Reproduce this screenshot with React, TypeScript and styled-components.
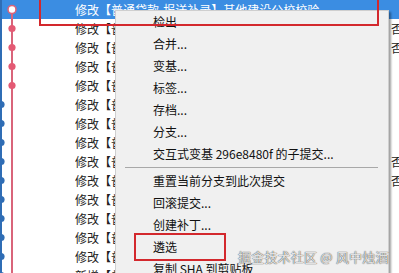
import React from "react";
import styled, { createGlobalStyle } from "styled-components";

const Global = createGlobalStyle`
  html, body { margin: 0; padding: 0; background: #fff; overflow: hidden; }
  body { font-family: "Noto Sans CJK SC", "Noto Sans", sans-serif; }
`;

const Page = styled.div`
  position: relative;
  width: 399px;
  height: 273px;
  overflow: hidden;
  background: #fff;
`;

const List = styled.div`
  display: flex;
  flex-direction: column;
`;

const Row = styled.div<{ $selected?: boolean }>`
  display: grid;
  grid-template-columns: 24px 51px 316px 1fr;
  align-items: center;
  height: 19px;
  background: ${(p) => (p.$selected ? "#3b8de2" : "#fff")};
  color: ${(p) => (p.$selected ? "#fff" : "#222")};
  font-size: 12px;
  line-height: 19px;
  white-space: nowrap;
  overflow: hidden;
`;

const Cell = styled.div`
  overflow: hidden;
  height: 19px;
`;

const GraphSvg = styled.svg`
  display: block;
`;

const Menu = styled.div`
  position: absolute;
  left: 115px;
  top: 10px;
  width: 272px;
  background: #f0f0f0;
  border: 1px solid #cfcfcf;
  box-shadow: 2px 2px 2px rgba(0, 0, 0, 0.38);
  display: flex;
  flex-direction: column;
  font-size: 12px;
  color: #111;
`;

const Item = styled.div`
  height: 22px;
  line-height: 22px;
  padding-left: 37px;
  white-space: nowrap;
`;

const Separator = styled.div`
  height: 1px;
  background: #a8a8a8;
  margin: 2px 10px 2px 9px;
`;

const Box = styled.div<{ $l: number; $t: number; $w: number; $h: number }>`
  position: absolute;
  left: ${(p) => p.$l}px;
  top: ${(p) => p.$t}px;
  width: ${(p) => p.$w}px;
  height: ${(p) => p.$h}px;
  border: 2px solid #d3282d;
  box-sizing: border-box;
  pointer-events: none;
`;

const Watermark = styled.div`
  position: absolute;
  left: 238px;
  top: 247px;
  font-size: 13px;
  color: rgba(255, 255, 255, 0.85);
  text-shadow: 0 0 1px rgba(0, 0, 0, 0.7), 0 0 1px rgba(0, 0, 0, 0.5);
  white-space: nowrap;
  letter-spacing: 0.2px;
`;

type Kind = "top" | "pink" | "blue";

function Graph({ kind }: { kind: Kind }) {
  return (
    <GraphSvg width={24} height={19} viewBox="0 0 24 19">
      <rect x={0} y={0} width={2} height={19} fill="#2f6db5" />
      {kind === "top" ? (
        <rect x={11} y={9} width={2} height={10} fill="#d9647a" />
      ) : (
        <rect x={11} y={0} width={2} height={19} fill="#d9647a" />
      )}
      {kind === "top" && (
        <circle cx={12} cy={9.5} r={4} fill="#fff" stroke="#d9647a" strokeWidth={1.6} />
      )}
      {kind === "pink" && <circle cx={12} cy={9.5} r={3.6} fill="#e45a74" />}
      {kind === "blue" && <circle cx={1} cy={9.5} r={3.6} fill="#2f6db5" />}
    </GraphSvg>
  );
}

const rows: { kind: Kind; text: string; extra?: string }[] = [
  { kind: "top", text: "修改【普通贷款-报送补录】其他建设公校校验" },
  { kind: "pink", text: "修改【普通贷款-报送补录】", extra: "否利" },
  { kind: "pink", text: "修改【普通贷款-报送补录】", extra: "否利" },
  { kind: "pink", text: "修改【普通贷款-报送补录】" },
  { kind: "pink", text: "修改【普通贷款-报送补录】" },
  { kind: "blue", text: "修改【普通贷款-报送补录】" },
  { kind: "blue", text: "修改【普通贷款-报送补录】" },
  { kind: "blue", text: "修改【普通贷款-报送补录】" },
  { kind: "blue", text: "修改【普通贷款-报送补录】", extra: "否利" },
  { kind: "blue", text: "修改【普通贷款-报送补录】", extra: "否利" },
  { kind: "blue", text: "修改【普通贷款-报送补录】" },
  { kind: "blue", text: "修改【普通贷款-报送补录】" },
  { kind: "blue", text: "修改【普通贷款-报送补录】" },
  { kind: "blue", text: "修改【普通贷款-报送补录】" },
  { kind: "blue", text: "新增【普通贷款-报送补录】" },
];

const menuTop = [
  "检出",
  "合并...",
  "变基...",
  "标签...",
  "存档...",
  "分支...",
  "交互式变基 296e8480f 的子提交...",
];
const menuBottom = ["重置当前分支到此次提交", "回滚提交...", "创建补丁...", "遴选", "复制 SHA 到剪贴板"];

export default function App() {
  return (
    <Page>
      <Global />
      <List>
        {rows.map((r, i) => (
          <Row key={i} $selected={i === 0}>
            <Cell>
              <Graph kind={r.kind} />
            </Cell>
            <Cell />
            <Cell>{r.text}</Cell>
            <Cell>{r.extra ?? ""}</Cell>
          </Row>
        ))}
      </List>
      <Menu>
        {menuTop.map((m) => (
          <Item key={m}>{m}</Item>
        ))}
        <Separator />
        {menuBottom.map((m) => (
          <Item key={m}>{m}</Item>
        ))}
      </Menu>
      <Box $l={39} $t={-10} $w={340} $h={36} />
      <Box $l={134} $t={233} $w={92} $h={28} />
      <Watermark>掘金技术社区 @ 风中烛酒</Watermark>
    </Page>
  );
}
